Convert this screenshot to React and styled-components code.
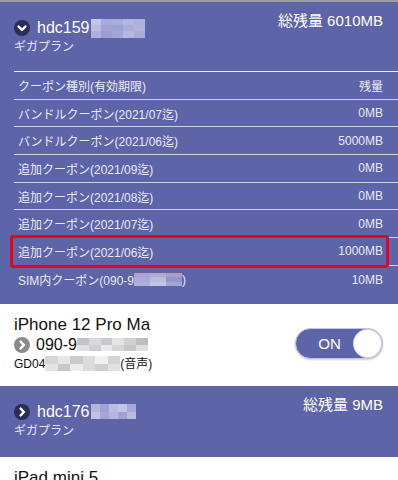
import React from 'react';
import styled, { createGlobalStyle } from 'styled-components';

const PURPLE = '#5e64a8';

const Global = createGlobalStyle`
  html, body { margin: 0; padding: 0; background: #fff; }
  body {
    font-family: "Liberation Sans", "Noto Sans CJK JP", sans-serif;
    -webkit-font-smoothing: antialiased;
  }
`;

const Page = styled.div`
  width: 398px;
  height: 480px;
  overflow: hidden;
  display: flex;
  flex-direction: column;
`;

const TopStrip = styled.div`
  height: 2px;
  background: #9d9da6;
  flex: none;
`;

const AccountCard = styled.section`
  background: ${PURPLE};
  color: #fff;
  flex: none;
`;

const Header = styled.div`
  display: flex;
  justify-content: space-between;
  align-items: flex-start;
  padding: 9px 15px ${p => p.$pb}px 14px;
`;

const TitleBlock = styled.div`
  margin-top: 7px;
`;

const TitleRow = styled.div`
  display: flex;
  align-items: center;
  gap: 7px;
  font-size: 16px;
  line-height: 20px;
`;

const Plan = styled.div`
  margin-top: 2px;
  font-size: 12px;
  line-height: 14px;
  color: #e6e7f3;
`;

const Total = styled.div`
  font-size: 15px;
  line-height: 20px;
`;

const Inline = styled.span`
  display: inline-flex;
  align-items: center;
`;

const CouponTable = styled.div`
  margin-left: 14px;
  border-top: 1px solid #eef0f9;
  padding-bottom: 10px;
`;

const Row = styled.div`
  position: relative;
  display: flex;
  justify-content: space-between;
  align-items: center;
  box-sizing: border-box;
  height: 27.7px;
  padding: 0 15px 0 4px;
  font-size: 12px;
  color: #e9eaf5;
  border-bottom: ${p => (p.$last ? 'none' : '1px solid #cfd1e8')};
`;

const Highlight = styled.div`
  position: absolute;
  left: -4px;
  right: 9px;
  top: -3px;
  bottom: -3px;
  border: 3px solid #e8001c;
  border-radius: 3px;
  pointer-events: none;
`;

const DeviceRow = styled.section`
  display: flex;
  justify-content: space-between;
  align-items: center;
  padding: 11px 15px 13px 14px;
  background: #fff;
  color: #111;
  flex: none;
`;

const DeviceName = styled.div`
  font-size: 17px;
  line-height: 20px;
`;

const NumberRow = styled.div`
  display: flex;
  align-items: center;
  gap: 6px;
  font-size: 16px;
  line-height: 20px;
`;

const Meta = styled.div`
  display: flex;
  align-items: center;
  font-size: 12px;
  line-height: 18px;
`;

const Toggle = styled.div`
  box-sizing: border-box;
  width: 88px;
  height: 31px;
  border-radius: 16px;
  border: 1.5px solid #c4c6e1;
  background: ${PURPLE};
  box-shadow: 0 1px 2px rgba(0, 0, 0, 0.18);
  display: flex;
  align-items: center;
  padding: 0 1px 0 9px;
`;

const ToggleLabel = styled.span`
  flex: 1;
  text-align: center;
  color: #fff;
  font-size: 15px;
`;

const Knob = styled.span`
  width: 27px;
  height: 27px;
  border-radius: 50%;
  background: #fff;
  box-shadow: 0 0 0 1px #d7d8ec;
`;

const MosaicGrid = styled.span`
  display: inline-grid;
  grid-template-columns: repeat(${p => p.$cols}, 1fr);
  width: ${p => p.$w}px;
  height: ${p => p.$h}px;
  flex: none;
  margin-left: ${p => p.$ml || 0}px;
`;

const Tile = styled.span`
  background: ${p => p.$c};
`;

const Mosaic = ({ w, h, cols, colors, ml }) => (
  <MosaicGrid $w={w} $h={h} $cols={cols} $ml={ml}>
    {colors.map((c, i) => (
      <Tile key={i} $c={c} />
    ))}
  </MosaicGrid>
);

const CircleChevron = ({ dir, bg }) => (
  <svg width="16" height="16" viewBox="0 0 16 16" style={{ flex: 'none' }}>
    <circle cx="8" cy="8" r="8" fill={bg} />
    {dir === 'down' ? (
      <polyline points="4.6,6.6 8,9.9 11.4,6.6" fill="none" stroke="#fff" strokeWidth="2.4" strokeLinecap="round" strokeLinejoin="round" />
    ) : (
      <polyline points="6.6,4.6 9.9,8 6.6,11.4" fill="none" stroke="#fff" strokeWidth="2.4" strokeLinecap="round" strokeLinejoin="round" />
    )}
  </svg>
);

const coupons = [
  ['バンドルクーポン(2021/07迄)', '0MB'],
  ['バンドルクーポン(2021/06迄)', '5000MB'],
  ['追加クーポン(2021/09迄)', '0MB'],
  ['追加クーポン(2021/08迄)', '0MB'],
  ['追加クーポン(2021/07迄)', '0MB'],
  ['追加クーポン(2021/06迄)', '1000MB', true],
];

const M1 = ['#c3c5e6', '#a7aad8', '#a9acd9', '#b3b6de', '#aeb1dc', '#b9bbe1', '#a0a3d4', '#9da0d2', '#aaaddb', '#b1b4dd', '#aeb0da', '#9a9dd1', '#a3a6d6', '#b6b8df', '#a9acd8'];
const M2 = ['#b2b5de', '#9ea1d3', '#b9bbe1', '#c3c5e6', '#a6a9d7', '#c0c2e5', '#a3a6d6', '#b4b6de', '#9fa2d3', '#b8bae0'];
const M3 = ['#c4c4c6', '#d9d9db', '#c9c9cb', '#e4e4e6', '#d0d0d2', '#bdbdbf', '#e1e1e3', '#cfcfd1', '#e9e9eb', '#d5d5d7', '#c6c6c8', '#dedee0'];
const M4 = ['#d6d6d8', '#e6e6e8', '#cacacc', '#dcdcde', '#f0f0f2', '#d3d3d5', '#e4e4e6', '#c8c8ca', '#ececee', '#dadadc', '#cfcfd1', '#e1e1e3'];
const M5 = ['#b3a0c8', '#b8a6cc', '#ae9cc4', '#a8abd8', '#b9bce0', '#9497cc', '#aeb1db', '#c2c4e5', '#a2a5d5'];

export default function App() {
  return (
    <Page>
      <Global />
      <TopStrip />
      <AccountCard>
        <Header $pb={17}>
          <TitleBlock>
            <TitleRow>
              <CircleChevron dir="down" bg="#2b2d55" />
              <Inline>
                hdc159
                <Mosaic w={54} h={19} cols={5} colors={M1} ml={1} />
              </Inline>
            </TitleRow>
            <Plan>ギガプラン</Plan>
          </TitleBlock>
          <Total>総残量 6010MB</Total>
        </Header>
        <CouponTable>
          <Row>
            <span>クーポン種別(有効期限)</span>
            <span>残量</span>
          </Row>
          {coupons.map(([name, val, hl]) => (
            <Row key={name}>
              <span>{name}</span>
              <span>{val}</span>
              {hl && <Highlight />}
            </Row>
          ))}
          <Row $last>
            <Inline>
              SIM内クーポン(090-9
              <Mosaic w={48} h={13} cols={3} colors={M5} />
              )
            </Inline>
            <span>10MB</span>
          </Row>
        </CouponTable>
      </AccountCard>
      <DeviceRow>
        <div>
          <DeviceName>iPhone 12 Pro Ma</DeviceName>
          <NumberRow>
            <CircleChevron dir="right" bg="#8b8b8d" />
            <Inline>
              090-9
              <Mosaic w={71} h={13} cols={6} colors={M3} />
            </Inline>
          </NumberRow>
          <Meta>
            GD04
            <Mosaic w={75} h={15} cols={6} colors={M4} />
            (音声)
          </Meta>
        </div>
        <Toggle>
          <ToggleLabel>ON</ToggleLabel>
          <Knob />
        </Toggle>
      </DeviceRow>
      <AccountCard>
        <Header $pb={19}>
          <TitleBlock>
            <TitleRow>
              <CircleChevron dir="right" bg="#2b2d55" />
              <Inline>
                hdc176
                <Mosaic w={45} h={15} cols={5} colors={M2} ml={1} />
              </Inline>
            </TitleRow>
            <Plan>ギガプラン</Plan>
          </TitleBlock>
          <Total>総残量 9MB</Total>
        </Header>
      </AccountCard>
      <DeviceRow>
        <DeviceName>iPad mini 5</DeviceName>
      </DeviceRow>
    </Page>
  );
}
